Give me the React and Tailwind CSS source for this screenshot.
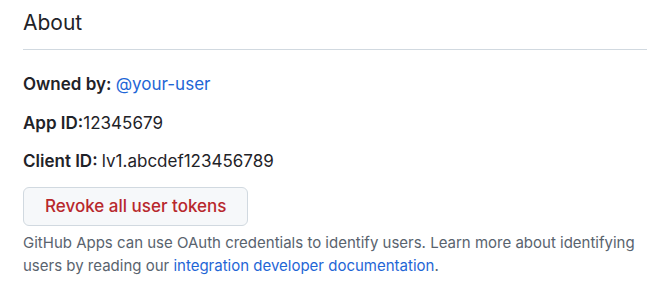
import React from 'react'

const App = () => {
    return (
        <div className="w-[652px] h-[295px] bg-white pl-[23px] pr-[5px] text-[#1f2328]" style={{ fontFamily: 'Inter, "Liberation Sans", Arial, sans-serif' }}>
            <h2 className="text-[21px] leading-[30px] font-normal pt-[8px] pb-[11px] border-b border-[#d1d9e0]">
                About
            </h2>

            <p className="mt-[23px] text-[17px] leading-[22px]">
                <strong className="font-semibold">Owned by: </strong>
                <a href="#" className="text-[#1f66d6]">@your-user</a>
            </p>
            <p className="mt-[17px] text-[17px] leading-[22px]">
                <strong className="font-semibold">App ID:</strong>12345679
            </p>
            <p className="mt-[16px] text-[17px] leading-[22px]">
                <strong className="font-semibold">Client ID: </strong>lv1.abcdef123456789
            </p>

            <button className="mt-[15px] h-[39px] px-[21px] rounded-md border border-[#d1d9e0] bg-[#f6f8fa] text-[#b8282d] text-[17px] font-medium">
                Revoke all user tokens
            </button>

            <p className="mt-[5px] text-[15px] leading-[23px] text-[#59636e]">
                GitHub Apps can use OAuth credentials to identify users. Learn more about identifying users by reading our{' '}
                <a href="#" className="text-[#1f66d6]">integration developer documentation</a>.
            </p>
        </div>
    )
}

export default App;
